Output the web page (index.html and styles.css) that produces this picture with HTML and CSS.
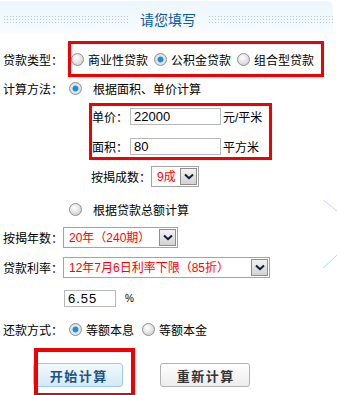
FILE: index.html
```html
<!DOCTYPE html>
<html lang="zh-CN">
<head>
<meta charset="utf-8">
<title>请您填写</title>
<link rel="stylesheet" href="styles.css">
</head>
<body>
<div class="page">
  <div class="hd">
    <span class="dots"></span>
    <h2 class="title">请您填写</h2>
    <span class="dots"></span>
  </div>

  <div class="form">
    <div class="row row-type">
      <span class="lbl">贷款类型：</span>
      <div class="hl type-box">
        <label class="opt"><input class="rd" type="radio" name="t">商业性贷款</label>
        <label class="opt"><input class="rd" type="radio" name="t" checked>公积金贷款</label>
        <label class="opt"><input class="rd" type="radio" name="t">组合型贷款</label>
      </div>
    </div>

    <div class="row row-calc">
      <span class="lbl">计算方法：</span>
      <label class="opt opt-wide"><input class="rd" type="radio" name="m" checked>根据面积、单价计算</label>
    </div>

    <div class="hl area-box">
      <div class="sub-row"><span>单价：</span><input class="txt" type="text" value="22000"><span class="unit">元/平米</span></div>
      <div class="sub-row second"><span>面积：</span><input class="txt" type="text" value="80"><span class="unit">平方米</span></div>
    </div>

    <div class="row row-ratio">
      <span>按揭成数：</span>
      <span class="sel sel-ratio">
        <select><option>9成</option></select>
        <span class="arr"><svg width="10" height="7" viewBox="0 0 10 7"><path d="M1 1.5 L5 5.2 L9 1.5" fill="none" stroke="#0d1b3a" stroke-width="2"/></svg></span>
      </span>
    </div>

    <div class="row row-total">
      <label class="opt opt-wide"><input class="rd" type="radio" name="m">根据贷款总额计算</label>
    </div>

    <div class="row row-years">
      <span class="lbl">按揭年数：</span>
      <span class="sel sel-years">
        <select><option>20年（240期）</option></select>
        <span class="arr"><svg width="10" height="7" viewBox="0 0 10 7"><path d="M1 1.5 L5 5.2 L9 1.5" fill="none" stroke="#0d1b3a" stroke-width="2"/></svg></span>
      </span>
    </div>

    <div class="row row-rate">
      <span class="lbl">贷款利率：</span>
      <span class="sel sel-rate">
        <select><option>12年7月6日利率下限（85折）</option></select>
        <span class="arr"><svg width="10" height="7" viewBox="0 0 10 7"><path d="M1 1.5 L5 5.2 L9 1.5" fill="none" stroke="#0d1b3a" stroke-width="2"/></svg></span>
      </span>
    </div>

    <div class="row row-pct">
      <input class="txt txt-rate" type="text" value="6.55"><span class="pct">%</span>
    </div>

    <div class="row row-pay">
      <span class="lbl">还款方式：</span>
      <label class="opt"><input class="rd" type="radio" name="p" checked>等额本息</label>
      <label class="opt"><input class="rd" type="radio" name="p">等额本金</label>
    </div>

    <div class="row row-btns">
      <span class="mark"><button class="btn btn-start" type="button">开始计算</button></span>
      <button class="btn btn-reset" type="button">重新计算</button>
    </div>
  </div>

  <svg class="deco" width="16" height="80" viewBox="0 0 16 80">
    <path d="M1 1 Q8 6 15 12" fill="none" stroke="#b4dcf3" stroke-width="1"/>
    <path d="M1 69 Q9 62 15 56" fill="none" stroke="#b4dcf3" stroke-width="1"/>
  </svg>
</div>
</body>
</html>
```

FILE: styles.css
```css
* { box-sizing: border-box; }

body {
  margin: 0;
  background: #fff;
  font-family: "Liberation Sans", "Noto Sans CJK SC", sans-serif;
  font-size: 12px;
  color: #000;
}

.page {
  position: relative;
  width: 337px;
  height: 395px;
  overflow: hidden;
}

/* header */
.hd {
  margin-top: 1px;
  width: 333px;
  height: 33px;
  padding-left: 4px;
  display: grid;
  grid-template-columns: 124px auto 124px;
  column-gap: 12px;
  align-items: start;
  background: linear-gradient(#edf7fd, #f3faff 70%, #fbfdff);
  border-top-right-radius: 6px;
}

.dots {
  margin-top: 15px;
  height: 7px;
  background:
    linear-gradient(90deg, #b3c9da 1px, transparent 1px) 0 0 / 3px 1px repeat-x,
    linear-gradient(90deg, #b3c9da 1px, transparent 1px) 0 3px / 3px 1px repeat-x,
    linear-gradient(90deg, #b3c9da 1px, transparent 1px) 0 6px / 3px 1px repeat-x;
}

.title {
  margin: 10px 0 0;
  font-family: "Noto Sans CJK SC", sans-serif;
  font-size: 14px;
  line-height: 16px;
  font-weight: normal;
  color: #0b5a9f;
}

/* form */
.form { padding-left: 3px; }

.row {
  display: flex;
  align-items: center;
  white-space: nowrap;
}

.lbl { width: 60px; }

.opt {
  display: flex;
  align-items: center;
  gap: 4px;
}

.opt-wide { gap: 11px; }

.rd {
  appearance: none;
  -webkit-appearance: none;
  width: 13px;
  height: 13px;
  margin: 0;
  border-radius: 50%;
  border: 1px solid #8f8f8f;
  background: radial-gradient(circle at 40% 35%, #ffffff 0, #e6e6e6 45%, #c4c4c4 100%);
  flex: none;
}

.rd:checked {
  background: radial-gradient(circle, #1a8fdc 0, #1a8fdc 2.6px, #e9e9e9 3.4px, #d0d0d0 100%);
}

.hl { border: 3px solid #f00000; }

.row-type { margin-top: 7px; }

.type-box {
  margin-left: 5px;
  width: 256px;
  height: 36px;
  display: flex;
  align-items: center;
  gap: 6px;
}

.row-calc {
  margin-top: 1px;
  height: 20px;
}
.row-calc .opt { margin-left: 6px; }

.area-box {
  margin-top: 5px;
  margin-left: 86px;
  width: 183px;
}

.sub-row {
  display: flex;
  align-items: center;
  height: 21px;
  white-space: nowrap;
}
.sub-row.second { margin-top: 9px; }

.txt {
  width: 91px;
  height: 17px;
  margin: 0 2px;
  padding: 0 3px;
  border: 1px solid #b6b9bd;
  font-family: "Liberation Sans", "Noto Sans CJK SC", sans-serif;
  font-size: 13px;
  color: #000;
  outline: none;
}

.row-ratio {
  margin-top: 6px;
  height: 21px;
  padding-left: 88px;
}

.sel {
  display: inline-flex;
  height: 21px;
  border: 1px solid #a4a4a4;
  background: #fff;
}

.sel select {
  appearance: none;
  -webkit-appearance: none;
  flex: 1;
  min-width: 0;
  border: 0;
  margin: 0;
  padding: 0 0 0 5px;
  background: transparent;
  color: #f00;
  font-family: "Liberation Sans", "Noto Sans CJK SC", sans-serif;
  font-size: 12px;
  outline: none;
}

.arr {
  width: 17px;
  margin: 1px 1px 1px 0;
  border: 1px solid #8e8e8e;
  background: linear-gradient(#f2f2f2, #d3d3d3);
  display: flex;
  align-items: center;
  justify-content: center;
}

.sel-ratio { width: 48px; }
.sel-years { width: 115px; }
.sel-rate { width: 207px; }

.row-total {
  margin-top: 12px;
  height: 20px;
  padding-left: 66px;
}

.row-years {
  margin-top: 8px;
  height: 21px;
}

.row-rate {
  margin-top: 9px;
  height: 21px;
}

.row-pct {
  margin-top: 12px;
  height: 17px;
  padding-left: 61px;
}

.txt-rate {
  width: 52px;
  margin: 0;
  font-size: 13px;
  letter-spacing: 1px;
}

.pct {
  margin-left: 9px;
  font-size: 10px;
}

.row-pay {
  margin-top: 12px;
  height: 20px;
}
.row-pay .opt:first-of-type { margin-left: 6px; }
.row-pay .opt + .opt { margin-left: 8px; }

.row-btns {
  margin-top: 24px;
  height: 24px;
  padding-left: 30px;
}

.mark { position: relative; display: inline-flex; }

.mark::after {
  content: "";
  position: absolute;
  left: 1px;
  top: -15px;
  width: 93px;
  height: 41px;
  border: 4px solid #f00000;
}

.btn {
  width: 90px;
  height: 24px;
  margin: 0;
  padding: 0;
  border-radius: 3px;
  font-family: "Noto Sans CJK SC", sans-serif;
  font-size: 13px;
  font-weight: bold;
  letter-spacing: 1.5px;
  text-indent: 1.5px;
}

.btn-start {
  border: 1px solid #9ccbe8;
  background: linear-gradient(#f2f9fd, #d3e9f7);
  color: #1d5283;
}

.btn-reset {
  margin-left: 37px;
  border: 1px solid #b3b3b3;
  background: linear-gradient(#ffffff, #ececec);
  color: #333;
}

.deco {
  position: absolute;
  left: 322px;
  top: 199px;
}
```
